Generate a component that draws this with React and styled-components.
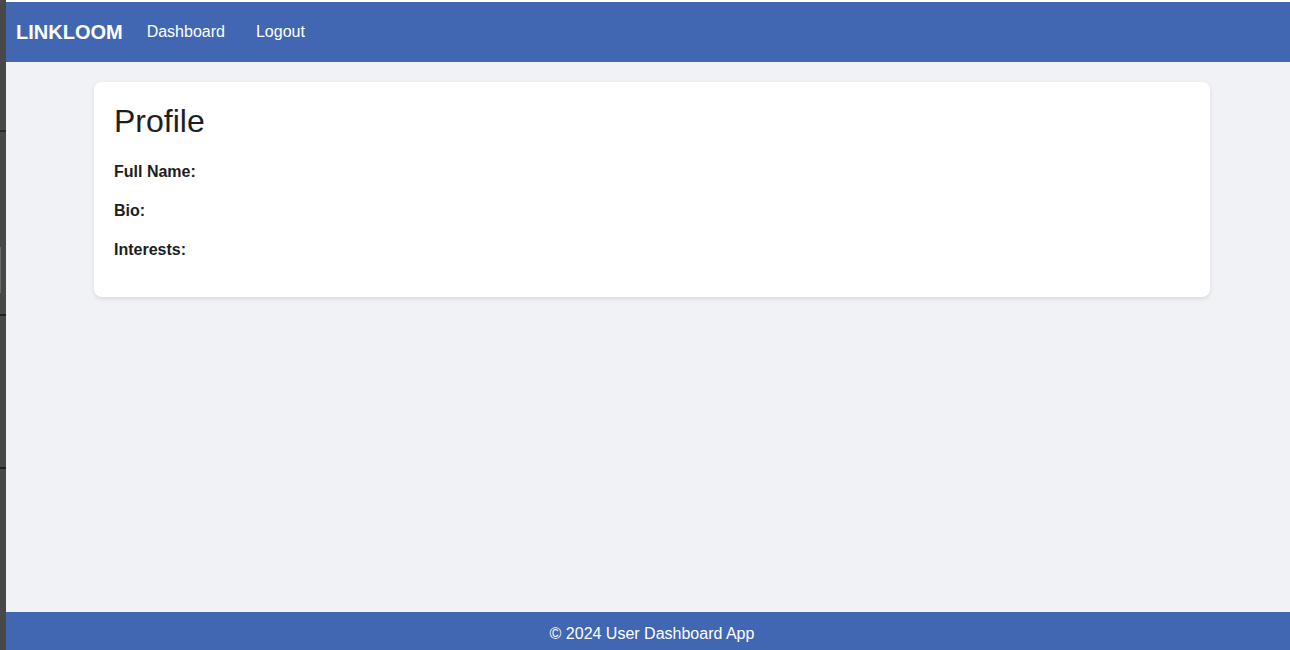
import styled, { createGlobalStyle } from 'styled-components';

const GlobalStyle = createGlobalStyle`
  html, body {
    margin: 0;
    padding: 0;
    font-family: 'Liberation Sans', Arial, sans-serif;
    background-color: #ffffff;
  }
`;

const Shell = styled.div`
  display: flex;
  min-height: 650px;
`;

const SideStrip = styled.div`
  width: 6px;
  flex-shrink: 0;
  background:
    linear-gradient(#1f1f1f, #1f1f1f) 0 314px / 6px 2px no-repeat,
    linear-gradient(#1f1f1f, #1f1f1f) 0 467px / 6px 2px no-repeat,
    linear-gradient(#2a2a2a, #2a2a2a) 0 130px / 6px 2px no-repeat,
    linear-gradient(#6a6a6a, #6a6a6a) 0 247px / 1px 46px no-repeat,
    #484848;
`;

const Page = styled.div`
  flex: 1;
  display: flex;
  flex-direction: column;
  background-color: #f0f2f5;
  padding-top: 2px;
  box-shadow: inset 0 2px 0 #ffffff;
`;

const Navbar = styled.nav`
  height: 60px;
  display: flex;
  align-items: center;
  padding: 0 10px;
  background-color: #4267b2;
  color: white;
`;

const Brand = styled.span`
  font-size: 20px;
  font-weight: bold;
  margin-right: 24px;
`;

const NavLink = styled.a`
  font-size: 16px;
  color: white;
  text-decoration: none;
  margin-right: 31px;
`;

const Main = styled.main`
  flex: 1;
  padding: 20px 0 20px 8px;
`;

const Card = styled.section`
  max-width: 1076px;
  margin: 0 auto;
  padding: 21px 20px 20px;
  background-color: white;
  border-radius: 8px;
  box-shadow: 0 2px 4px rgba(0, 0, 0, 0.1);
  color: #1c1e21;
`;

const Title = styled.h1`
  font-size: 32px;
  font-weight: normal;
  line-height: 37px;
  margin: 0 0 20px;
`;

const Field = styled.p`
  font-size: 16px;
  line-height: 24px;
  margin: 0 0 15px;
`;

const Footer = styled.footer`
  background-color: #4267b2;
  color: white;
  text-align: center;
  font-size: 16px;
  padding: 13px 0 7px 8px;
`;

function App() {
  return (
    <>
      <GlobalStyle />
      <Shell>
        <SideStrip />
        <Page>
          <Navbar>
            <Brand>LINKLOOM</Brand>
            <NavLink href="#">Dashboard</NavLink>
            <NavLink href="#">Logout</NavLink>
          </Navbar>
          <Main>
            <Card>
              <Title>Profile</Title>
              <Field><strong>Full Name:</strong></Field>
              <Field><strong>Bio:</strong></Field>
              <Field><strong>Interests:</strong></Field>
            </Card>
          </Main>
          <Footer>© 2024 User Dashboard App</Footer>
        </Page>
      </Shell>
    </>
  );
}

export default App;
